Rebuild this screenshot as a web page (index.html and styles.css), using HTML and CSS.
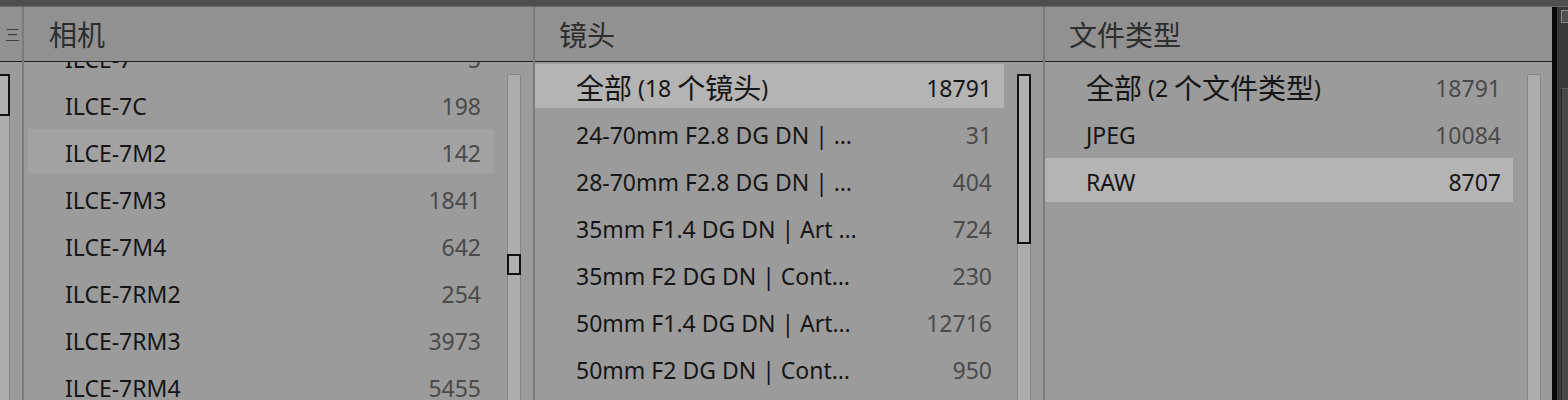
FILE: index.html
```html
<!DOCTYPE html>
<html lang="zh-CN">
<head>
<meta charset="utf-8">
<title>元数据浏览器</title>
<link rel="stylesheet" href="styles.css">
</head>
<body>
<div class="top"></div>
<div class="main">
  <section class="col partial">
    <div class="col-head head-icon"><span class="glyph">三</span></div>
    <div class="col-body">
      <div class="track track-cut"><div class="thumb thumb-top"></div></div>
    </div>
  </section>

  <section class="col cam">
    <div class="col-head">相机</div>
    <div class="col-body">
      <div class="rows">
        <div class="scrolled">
          <div class="row"><span class="label">ILCE-7</span><span class="count">5</span></div>
          <div class="row"><span class="label">ILCE-7C</span><span class="count">198</span></div>
          <div class="row hover"><span class="label">ILCE-7M2</span><span class="count">142</span></div>
          <div class="row"><span class="label">ILCE-7M3</span><span class="count">1841</span></div>
          <div class="row"><span class="label">ILCE-7M4</span><span class="count">642</span></div>
          <div class="row"><span class="label">ILCE-7RM2</span><span class="count">254</span></div>
          <div class="row"><span class="label">ILCE-7RM3</span><span class="count">3973</span></div>
          <div class="row"><span class="label">ILCE-7RM4</span><span class="count">5455</span></div>
        </div>
      </div>
      <div class="track"><div class="thumb thumb-small"></div></div>
    </div>
  </section>

  <section class="col lens">
    <div class="col-head">镜头</div>
    <div class="col-body">
      <div class="rows">
        <div class="row selected"><span class="label"><span class="cjk">全部</span> (18 <span class="cjk">个镜头</span>)</span><span class="count">18791</span></div>
        <div class="row"><span class="label">24-70mm F2.8 DG DN | …</span><span class="count">31</span></div>
        <div class="row"><span class="label">28-70mm F2.8 DG DN | …</span><span class="count">404</span></div>
        <div class="row"><span class="label">35mm F1.4 DG DN | Art …</span><span class="count">724</span></div>
        <div class="row"><span class="label">35mm F2 DG DN | Cont…</span><span class="count">230</span></div>
        <div class="row"><span class="label">50mm F1.4 DG DN | Art…</span><span class="count">12716</span></div>
        <div class="row"><span class="label">50mm F2 DG DN | Cont…</span><span class="count">950</span></div>
      </div>
      <div class="track"><div class="thumb thumb-long"></div></div>
    </div>
  </section>

  <section class="col ftype">
    <div class="col-head">文件类型</div>
    <div class="col-body">
      <div class="rows">
        <div class="row"><span class="label"><span class="cjk">全部</span> (2 <span class="cjk">个文件类型</span>)</span><span class="count">18791</span></div>
        <div class="row"><span class="label">JPEG</span><span class="count">10084</span></div>
        <div class="row selected"><span class="label">RAW</span><span class="count">8707</span></div>
      </div>
      <div class="track"></div>
    </div>
  </section>

  <div class="edge"></div>
  <div class="dark">
    <div class="mini"></div>
    <div class="pane"></div>
  </div>
</div>
</body>
</html>
```

FILE: styles.css
```css
* { box-sizing: border-box; }

html, body {
  margin: 0;
  padding: 0;
}

body {
  width: 1568px;
  height: 400px;
  overflow: hidden;
  background: #9b9b9b;
  font-family: "Noto Sans", "Noto Sans CJK SC", sans-serif;
  font-size: 23px;
  color: #151515;
}

.top {
  height: 7px;
  background: #4e4e4e;
  border-bottom: 1px solid #6a6a6a;
}

.main {
  display: flex;
  height: 393px;
}

.col {
  display: flex;
  flex-direction: column;
  flex: none;
  background: #9b9b9b;
  border-right: 2px solid #7b7b7b;
  overflow: hidden;
}

.partial { width: 24px; }
.cam { width: 511px; }
.lens { width: 510px; }
.ftype { width: 507px; border-right: none; }

.col-head {
  height: 55px;
  flex: none;
  display: flex;
  align-items: center;
  padding-left: 24px;
  padding-bottom: 1px;
  background: #919191;
  border-bottom: 1px solid #1f1f1f;
  color: #2d2d2d;
  font-family: "Noto Sans CJK SC", sans-serif;
  font-size: 28px;
  line-height: 1;
}

.cam .col-head { padding-left: 25px; }

.head-icon {
  padding-left: 0;
  justify-content: flex-end;
  padding-right: 2px;
}

.glyph {
  font-size: 15px;
  color: #3e3e3e;
}

.col-body {
  flex: 1;
  display: flex;
  padding-right: 12px;
  min-height: 0;
}

.ftype .col-body { padding-right: 11px; }

.rows {
  flex: 1;
  overflow: hidden;
  margin-right: 13px;
  padding-top: 2px;
}

.ftype .rows { margin-right: 14px; }
.cam .rows { margin-left: 4px; }

.scrolled { margin-top: -29px; }

.row {
  height: 44px;
  margin-bottom: 3px;
  display: flex;
  align-items: center;
  justify-content: space-between;
  padding: 4px 12px 0 41px;
  white-space: nowrap;
  line-height: 32px;
}

.cam .row { padding-left: 37px; padding-right: 13px; }

.cjk {
  font-family: "Noto Sans CJK SC", sans-serif;
  font-size: 28px;
  vertical-align: -2px;
  line-height: 28px;
}

.row.hover { background: #a2a2a2; }
.row.selected { background: #b4b4b4; }

.count { color: #4a4a4a; }
.row.selected .count { color: #161616; }

.track {
  width: 14px;
  flex: none;
  margin-top: 12px;
  background: #adadad;
  border: 1px solid #858585;
  border-bottom: none;
  border-radius: 2px 2px 0 0;
}

.track-cut {
  margin-left: -5px;
  width: 15px;
}

.thumb {
  margin: -1px -1px 0 -1px;
  border: 2px solid #111;
  background: #b1b1b1;
}

.thumb-top { height: 42px; margin-top: -1px; }
.thumb-long { height: 170px; }
.thumb-small { height: 21px; margin-top: 179px; }

.edge {
  width: 5px;
  flex: none;
  background: #080808;
}

.dark {
  flex: 1;
  background: #393939;
  display: flex;
  flex-direction: column;
  padding-left: 4px;
}

.mini {
  width: 12px;
  height: 13px;
  margin-top: 3px;
  border: 1px solid #8a8a8a;
  background: #4f4f4f;
}

.pane {
  flex: 1;
  margin-top: 65px;
  background: #474747;
  border-top: 1px solid #5e5e5e;
  border-left: 1px solid #2a2a2a;
}
```
